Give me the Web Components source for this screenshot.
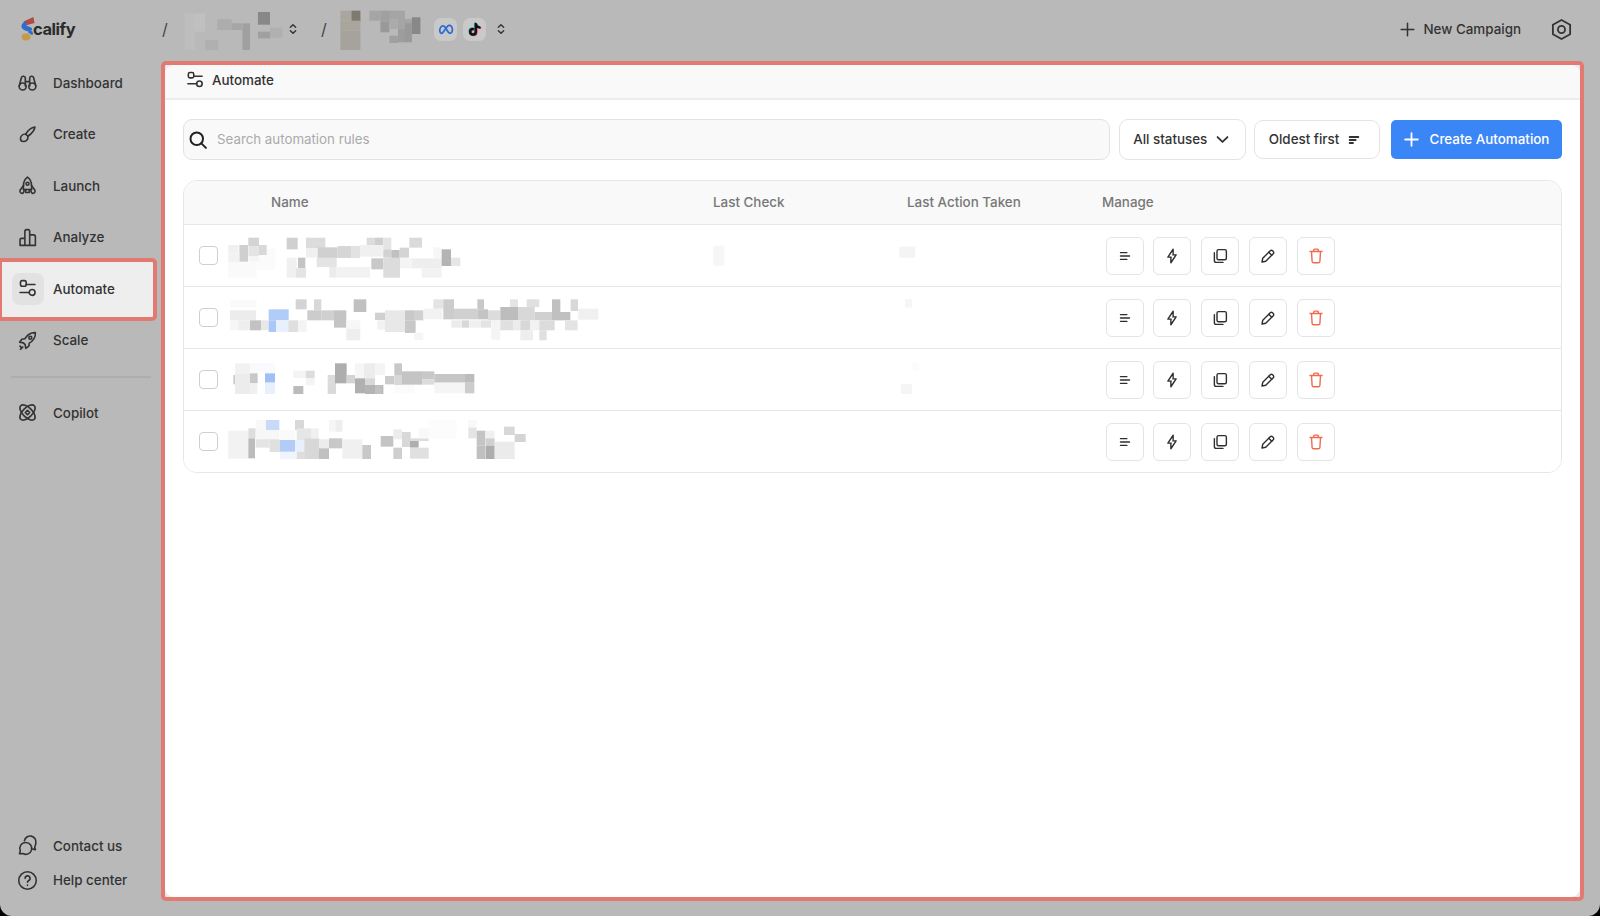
<!DOCTYPE html>
<html><head><meta charset="utf-8"><title>Automate</title>
<style>
html,body{margin:0;padding:0;background:#000;height:100%;overflow:hidden}
body{font-family:Inter,"Liberation Sans",sans-serif;font-size:13.4px}
</style></head><body>
<x-app>
  <x-topbar slot="top"></x-topbar>
  <x-sidebar slot="side"></x-sidebar>
  <x-panel slot="main" title="Automate">
    <x-toolbar></x-toolbar>
    <x-table></x-table>
  </x-panel>
</x-app>
<script>
const ICONS={
binoculars:'<circle cx="6.5" cy="16.5" r="4"/><circle cx="17.5" cy="16.5" r="4"/><path d="M2.5 16 5 6.5a2.3 2.3 0 0 1 4.5.5v9M21.500 16 19 6.500a2.300 2.300 0 0 0-4.500.500v9M9.500 11h5"/>',
brush:'<path d="M20.500 3.500c-3.500.5-8 4-10.500 8l2.500 2.500c3.500-2.500 7.500-7 8-10.500z"/><path d="M10 11.500c-3.500 0-6 2.300-6 5.300 0 2 1.500 3.200 3.500 3.200 3.200 0 5.400-2.800 5-6"/>',
launch:'<path d="M12 2.500c3 2.200 4.600 5.500 4.600 9.500l.2 4.500H7.200l.2-4.500c0-4 1.600-7.300 4.600-9.500z"/><circle cx="12" cy="10" r="1.700"/><path d="M7.400 12 3.500 17.500c-.5 1.800.5 3.500 2.300 3.500 1.500 0 2.200-1.500 2.400-4.500M16.600 12l3.900 5.500c.5 1.800-.5 3.500-2.300 3.500-1.500 0-2.200-1.500-2.400-4.500M10 16.500V20h4v-3.500"/>',
chart:'<path d="M3.500 21v-6.500a1.500 1.500 0 0 1 1.500-1.500h4v8zM9 21V5a2 2 0 0 1 2-2h1.500a2 2 0 0 1 2 2v16zM14.500 9H19a2 2 0 0 1 2 2v10H3.500"/>',
sliders:'<rect x="4" y="3" width="6.500" height="6.500" rx="2"/><path d="M10.500 7.500H20.500M3.500 16.500h10.500"/><circle cx="17.300" cy="16.500" r="3.300"/>',
rocket:'<path d="M21 3c-5-.2-9.300 2.300-12 7L5.500 10.500 3 14l4.300.7 2 2 .7 4.300 3.500-2.500.5-3.500c4.700-2.700 7.200-7 7-12z"/><circle cx="15.200" cy="8.800" r="1.700"/><path d="M3.500 18.500l1 1M6.500 19.500 4 22" stroke-width="2"/>',
atom:'<ellipse cx="12" cy="12" rx="11" ry="5.500" transform="rotate(45 12 12)"/><ellipse cx="12" cy="12" rx="11" ry="5.500" transform="rotate(-45 12 12)"/><path d="M12 9.500l2.500 2.500-2.500 2.500-2.500-2.500z"/>',
chat:'<path d="M10 8.500a6.800 6.800 0 1 1-3.300 12.700L2.800 21.500l1-3.400A6.800 6.800 0 0 1 10 8.500z"/><path d="M8.500 6.500A6.500 6.500 0 0 1 21.500 9c0 2.300-.8 3.700-1.300 4.700l.8 3-3.200-.7"/>',
help:'<circle cx="12" cy="12" r="10"/><path d="M9.300 9.500a2.800 2.800 0 1 1 4.200 2.400c-.9.500-1.500 1-1.500 2.100M12 17.300v.2" stroke-width="1.900"/>',
plus:'<path d="M12 4v16M4 12h16"/>',
hex:'<path d="M12 2l9 5v10l-9 5-9-5V7z"/><circle cx="12" cy="12" r="3.700"/>',
search:'<circle cx="10.500" cy="10.500" r="7.500"/><path d="M16 16l5.500 5.500"/>',
down:'<path d="M5 8.500l7 7 7-7"/>',
updown:'<path d="M8 9.500l4-4 4 4M8 14.500l4 4 4-4"/>',
sort:'<path d="M5.500 7.500h13M5.500 12h9M5.500 16.500h5"/>',
lines:'<path d="M6 7.500h8.500M6 12h12M6 16.500h8.500"/>',
bolt:'<path d="M13.500 9V3L6.500 13.500h4.500M10.500 15v6l7-10.500H13"/>',
copy:'<rect x="8" y="3.500" width="12.500" height="13.500" rx="2"/><path d="M4.500 7.500V18a2.500 2.500 0 0 0 2.500 2.500h9"/>',
pencil:'<path d="M4 20l1-5L15 5a2.100 2.100 0 0 1 3 0l1 1a2.100 2.100 0 0 1 0 3L9 19z"/><path d="M13 7l4 4"/>',
trash:'<path d="M9 5.500V4a1.200 1.200 0 0 1 1.200-1.200h3.600A1.200 1.200 0 0 1 15 4v1.500M4 6h16M6 6l.8 13.200a2 2 0 0 0 2 1.800h6.400a2 2 0 0 0 2-1.800L18 6"/>'
};
class XIcon extends HTMLElement{
  connectedCallback(){
    const s=this.getAttribute('size')||20,w=this.getAttribute('w')||1.6;
    this.attachShadow({mode:'open'}).innerHTML=`<style>:host{display:inline-flex;flex:none;width:${s}px;height:${s}px}svg{display:block;width:100%;height:100%;overflow:visible}</style><svg viewBox="0 0 24 24" fill="none" stroke="currentColor" stroke-width="${w*24/s}" stroke-linecap="round" stroke-linejoin="round">${ICONS[this.getAttribute('name')]||''}</svg>`;
  }
}
customElements.define('x-icon',XIcon);

const b=(s)=>s.trim().split(/;\s*/).filter(Boolean).map(r=>{const p=r.trim().split(/[ ,]+/);return p});
const MOSAIC={
 r1:{s:3,ox:170-226,oy:170-225,w:400,h:61,d:b(`175,277,85,46 #fafafa;260,235,55,65 #fbfbfb;175,225,30,22 #f0f0f0;208,225,26,50 #cfcfcf;235,203,32,25 #d4d4d4;235,228,32,30 #e4e4e4;267,225,23,30 #d8d8d8;175,247,33,30 #f2f2f2;235,258,32,17 #f5f5f5;350,203,33,35 #d0d0d0;408,203,58,32 #dcdcdc;408,235,35,28 #f0f0f0;443,232,60,32 #d0d0d0;503,228,42,36 #d6d6d6;545,228,25,36 #e2e2e2;570,225,70,35 #f0f0f0;590,203,25,22 #dcdcdc;615,203,25,22 #cfcfcf;640,203,24,35 #e4e4e4;640,238,24,25 #d2d2d2;664,240,25,24 #c0c0c0;689,233,28,30 #d4d4d4;718,203,38,30 #dadada;350,263,30,60 #f0f0f0;384,263,22,32 #c4c4c4;378,295,30,28 #e4e4e4;440,263,60,28 #e4e4e4;478,291,22,32 #ececec;500,291,100,32 #f2f2f2;604,265,36,33 #c8c8c8;640,263,50,60 #dcdcdc;690,265,35,30 #f4f4f4;725,265,90,30 #eeeeee;755,295,60,28 #f2f2f2;790,232,25,33 #f7f7f7;815,238,28,50 #b4b4b4;843,263,28,25 #e6e6e6`)},
 r2:{s:3,ox:220-226,oy:292-287,w:400,h:61,d:b(`30,25,80,20 #fafafa;30,55,78,30 #ececec;30,85,25,30 #f6f6f6;55,85,35,30 #eeeeee;90,85,33,30 #c2c2c2;123,85,23,30 #e8e8e8;146,52,60,33 #b1ccf7;146,85,22,35 #a9c7f7;168,85,37,35 #e8f0fd;205,85,30,35 #dfdfdf;235,85,25,35 #f4f4f4;227,22,33,30 #d4d4d4;282,22,22,33 #d8d8d8;262,55,42,30 #cccccc;304,55,38,30 #d0d0d0;342,55,37,52 #c4c4c4;379,85,42,25 #f7f7f7;379,110,42,35 #eeeeee;401,22,38,38 #c0c0c0;465,62,30,22 #d0d0d0;495,55,60,65 #e8e8e8;555,55,27,30 #c8c8c8;582,55,28,30 #d0d0d0;555,85,32,38 #c8c8c8;472,85,23,28 #f2f2f2;582,122,28,22 #f6f6f6;612,50,55,32 #f2f2f2;640,22,30,28 #e4e4e4;670,22,32,60 #cccccc;702,50,70,32 #d0d0d0;772,22,20,30 #c8c8c8;772,52,32,30 #c4c4c4;804,55,37,30 #dcdcdc;841,45,53,40 #bdbdbd;870,22,24,23 #e4e4e4;894,45,50,40 #d8d8d8;920,22,38,23 #e0e0e0;944,60,52,25 #d0d0d0;996,22,25,38 #c0c0c0;996,60,55,25 #c0c0c0;1052,22,22,35 #d8d8d8;1075,50,60,33 #f0f0f0;694,85,30,22 #ececec;725,85,22,22 #d8d8d8;747,85,36,22 #f0f0f0;783,85,30,22 #e4e4e4;814,85,27,58 #f4f4f4;841,85,38,30 #e0e0e0;879,85,22,30 #ececec;901,85,30,30 #d8d8d8;901,115,38,30 #eeeeee;931,85,28,30 #f2f2f2;958,85,46,30 #dcdcdc;958,115,22,30 #e0e0e0;1035,85,38,30 #e4e4e4`)},
 r3:{s:3,ox:170-226,oy:310-349,w:400,h:61,d:b(`190,195,5,28 #cccccc;195,160,45,30 #f2f2f2;240,160,75,30 #f9f9fe;195,190,45,62 #ececec;240,190,23,30 #c8c8c8;240,220,22,32 #f0f0f0;285,190,30,28 #a0bff5;285,218,30,34 #e8f0fd;370,182,37,22 #f4f4f4;407,182,27,22 #dcdcdc;407,204,27,22 #f4f4f4;370,228,30,24 #bbbbbb;473,195,25,30 #dcdcdc;473,225,25,27 #dadada;495,160,35,60 #aeaeae;530,195,25,25 #d4d4d4;555,160,30,45 #f6f6f6;582,160,33,45 #ececec;615,160,30,35 #f4f4f4;555,205,30,45 #b0b0b0;585,205,30,20 #d8d8d8;585,225,55,27 #b4b4b4;615,225,22,27 #c0c0c0;645,198,28,25 #cccccc;673,160,23,35 #c8c8c8;673,195,23,30 #d8d8d8;696,184,60,40 #c4c4c4;756,184,37,24 #c8c8c8;756,208,37,16 #dcdcdc;793,192,92,26 #c6c6c6;885,192,28,26 #bcbcbc;793,218,92,32 #f5f5f5;885,218,28,32 #cccccc;673,225,60,25 #fbfbfb`)},
 r4:{s:3,ox:170-226,oy:310-411,w:400,h:61,d:b(`258,330,30,30 #f8f8f8;288,330,40,30 #c8d9f9;375,330,27,30 #d8d8d8;175,362,60,84 #f2f2f2;235,355,22,30 #dddddd;235,385,20,60 #bcbcbc;257,360,70,30 #f7f7f7;257,388,42,25 #e4e4e4;299,388,30,38 #e0e0e0;328,360,48,30 #fafafa;329,425,50,22 #f0f4fc;329,390,46,35 #b3ccf6;375,390,28,35 #e8f0fd;380,355,43,35 #e6e6e6;403,385,45,62 #d8d8d8;380,425,25,22 #dddddd;423,355,23,30 #f0f0f0;447,388,30,27 #ececec;447,415,30,32 #c0c0c0;477,385,40,30 #c8c8c8;477,330,40,35 #f6f6f6;497,330,20,35 #eeeeee;517,388,60,58 #f0f0f0;577,405,26,42 #c8c8c8;632,378,38,32 #c4c4c4;670,358,26,30 #ececec;670,413,26,34 #cfcfcf;696,366,26,45 #d8d8d8;720,385,56,8 #dddddd;720,393,26,20 #aeaeae;720,413,56,33 #e0e0e0;746,355,30,30 #f8f8f8;775,330,85,55 #fcfcfc;895,352,25,33 #e4e4e4;895,330,25,22 #f8f8f8;920,362,26,45 #c4c4c4;920,407,26,40 #c0c0c0;947,362,27,23 #f0f0f0;947,385,27,22 #d0d0d0;947,407,27,40 #adadad;974,395,60,52 #ebebeb;1002,350,32,25 #d8d8d8;1034,372,33,24 #d4d4d4`)},
 c1:{s:1,ox:-713,oy:-225,w:389,h:61,d:b(`713.300,245.700,11,20 #f6f6f6;899.300,246.700,16,11 #f4f4f4`)},
 c2:{s:1,ox:-713,oy:-287,w:389,h:61,d:b(`905,299,7,8.500 #f6f6f6`)},
 c3:{s:1,ox:-713,oy:-349,w:389,h:61,d:b(`912,362.700,7,8.300 #fbfbfb;901,384,11,10 #f5f5f5`)},
 c4:{s:1,ox:-713,oy:-411,w:389,h:61,d:[]},
 t1:{s:2.9,sy:3,ox:-185,oy:-6,w:100,h:46,d:b(`535,40,30,110 #bebebe;565,40,30,55 #c0c0c0;595,120,38,30 #b0b0b0;630,57,42,33 #adadad;672,70,30,20 #a6a6a6;703,70,22,80 #a0a0a0;748,36,35,38 #888888;748,95,35,20 #a0a0a0;783,83,36,30 #b0b0b0`)},
 t2:{s:2.9,sy:3,ox:-342,oy:-6,w:82,h:46,d:b(`993,32,32,30 #a9a69f;1025,32,26,33 #7e7b6e;993,62,58,30 #a9a59c;993,92,58,58 #a6a39d;1077,32,32,30 #a5a5a5;1109,32,30,33 #a0a0a0;1109,65,26,32 #999999;1135,32,45,25 #a5a5a5;1135,57,25,30 #ababab;1160,57,40,30 #a5a5a5;1200,52,25,50 #888888;1135,107,25,22 #a0a0a0;1160,87,40,40 #9d9d9d;1180,70,20,55 #999999`)}
};
class XMosaic extends HTMLElement{
  connectedCallback(){
    const m=MOSAIC[this.getAttribute('set')],sy=m.sy||m.s;
    const rects=m.d.map(p=>{const [x,y,w,h]=p.slice(0,4).map(Number);return `<rect x="${(x/m.s+m.ox).toFixed(2)}" y="${(y/sy+m.oy).toFixed(2)}" width="${(w/m.s).toFixed(2)}" height="${(h/sy).toFixed(2)}" fill="${p[4]}"/>`}).join('');
    this.attachShadow({mode:'open'}).innerHTML=`<style>:host{display:block;flex:none;width:${m.w}px;height:${m.h}px}svg{display:block;overflow:visible;filter:blur(.5px)}</style><svg width="${m.w}" height="${m.h}" viewBox="0 0 ${m.w} ${m.h}">${rects}</svg>`;
  }
}
customElements.define('x-mosaic',XMosaic);

class XApp extends HTMLElement{
  connectedCallback(){
    this.attachShadow({mode:'open'}).innerHTML=`<style>
    :host{display:grid;width:1600px;height:916px;background:#b9b9b9;border-radius:0 0 12px 12px;overflow:hidden;grid-template-columns:161px 1fr;grid-template-rows:61px 1fr;color:#333}
    .top{grid-column:1/3}
    .main{padding:0 16px 15px 0;min-height:0;display:flex}
    ::slotted([slot=main]){flex:1}
    </style><div class="top"><slot name="top"></slot></div><slot name="side"></slot><div class="main"><slot name="main"></slot></div>`;
  }
}
customElements.define('x-app',XApp);

class XTopbar extends HTMLElement{
  connectedCallback(){
    this.attachShadow({mode:'open'}).innerHTML=`<style>
    :host{display:flex;align-items:center;height:61px;padding:0 27px 3px 21px;box-sizing:border-box;color:#333}
    .logo{display:flex;align-items:center;width:141px;flex:none}
    .logo svg{display:block;flex:none}
    .logo span{font-weight:700;font-size:16.500px;letter-spacing:-.45px;color:#2b2b2b;margin-left:-2px;margin-top:0}
    .sl{font-size:16px;color:#444;flex:none;width:6px;font-style:normal}
    .m1{margin-left:17px}
    .tile{width:23px;height:23px;border-radius:7px;background:#c9c9c9;display:flex;align-items:center;justify-content:center;flex:none;margin-left:6px}
    .right{margin-left:auto;display:flex;align-items:center}
    .new{display:flex;align-items:center;gap:6px;color:#333;font-size:13.400px;font-weight:450}
    .hex{margin-left:29px}
    </style>
    <div class="logo"><svg width="14" height="24" viewBox="0 0 14 24"><path d="M2.500 4.500 12.500 0l1 6-9 2.500z" fill="#b14a46"/><path d="M5 4C1.500 5.500 0 7.500 .5 10c.5 2.500 3.500 3.500 6.500 4.500l4-1.500c.5-1.500-.5-2.500-2-3-2-.6-4-1-4-2.500C5 6.500 5 5 5 4z" fill="#2a6ed0"/><path d="M7.500 14.500c3 .3 3.500 1.500 2.500 3" stroke="#2a6ed0" stroke-width="3" fill="none"/><ellipse cx="5" cy="20" rx="4.500" ry="3.400" fill="#c59b48"/></svg><span>calify</span></div>
    <i class="sl">/</i>
    <x-mosaic set="t1" class="m1"></x-mosaic>
    <x-icon name="updown" size="16" w="1.400"></x-icon>
    <i class="sl" style="margin-left:20px">/</i>
    <x-mosaic set="t2" style="margin-left:13px"></x-mosaic>
    <div class="tile" style="margin-left:12px"><svg width="16" height="16" viewBox="0 0 24 24" fill="none" stroke="#2d6cd4" stroke-width="2.600" stroke-linecap="round"><path d="M4 18c-1.500-2-1.500-6 0-8.500 2-3.500 5-3 7.500 1L15 16c2 3 5 3 6 0 1-3 .5-6-1-8-2-2.500-5-1.500-7 1.500L9 15c-1.500 2.500-3.500 4.500-5 3z"/></svg></div>
    <div class="tile"><svg width="15" height="15" viewBox="0 0 24 24" fill="none" stroke-width="3.800" stroke-linecap="round"><path d="M14 3v12.500a4.500 4.500 0 1 1-4.500-4.500M14 3c.5 3 2.500 5 6 5.500" stroke="#25c5cf" transform="translate(-1 -.8)"/><path d="M14 3v12.500a4.500 4.500 0 1 1-4.500-4.500M14 3c.5 3 2.500 5 6 5.500" stroke="#e53a5a" transform="translate(1 .8)"/><path d="M14 3v12.500a4.500 4.500 0 1 1-4.500-4.500M14 3c.5 3 2.500 5 6 5.500" stroke="#111"/></svg></div>
    <x-icon name="updown" size="16" w="1.400" style="margin-left:7px"></x-icon>
    <div class="right"><div class="new"><x-icon name="plus" size="19" w="1.500"></x-icon><span>New Campaign</span></div><x-icon class="hex" name="hex" size="23" w="1.800"></x-icon></div>`;
  }
}
customElements.define('x-topbar',XTopbar);

class XNavItem extends HTMLElement{
  connectedCallback(){
    const act=this.hasAttribute('active');
    this.attachShadow({mode:'open'}).innerHTML=`<style>
    :host{display:flex;align-items:center;height:36px;position:relative;color:#333}
    .t{width:32px;height:32px;margin-left:12px;border-radius:8px;display:flex;align-items:center;justify-content:center;flex:none;position:relative;z-index:1;${act?'background:#e2e2e2':''}}
    .t x-icon{margin-left:-1px}
    .l{margin-left:9px;font-size:13.400px;font-weight:${act?500:450};position:relative;z-index:1}
    .hl{position:absolute;left:0;width:157px;top:-13px;bottom:-14.200px;box-sizing:border-box;border:4px solid #e37a72;border-left-width:2px;border-radius:0 5px 5px 0;background:#eeeeee}
    </style>${act?'<div class="hl"></div>':''}<div class="t"><x-icon name="${this.getAttribute('icon')}" size="21" w="1.600"></x-icon></div><div class="l"><slot></slot></div>`;
  }
}
customElements.define('x-nav-item',XNavItem);

class XSidebar extends HTMLElement{
  connectedCallback(){
    this.attachShadow({mode:'open'}).innerHTML=`<style>
    :host{display:flex;flex-direction:column;width:161px;height:855px;box-sizing:border-box;padding:3.800px 0 18.700px}
    nav{display:flex;flex-direction:column;gap:15.500px}
    hr{border:0;height:2px;background:#aeaeae;margin:17.500px 11px 17px 11px;width:140px}
    .bot{margin-top:auto;display:flex;flex-direction:column}
    .bot x-nav-item{height:34.300px}
    </style>
    <nav><x-nav-item icon="binoculars">Dashboard</x-nav-item><x-nav-item icon="brush">Create</x-nav-item><x-nav-item icon="launch">Launch</x-nav-item><x-nav-item icon="chart">Analyze</x-nav-item><x-nav-item icon="sliders" active>Automate</x-nav-item><x-nav-item icon="rocket">Scale</x-nav-item></nav>
    <hr><x-nav-item icon="atom">Copilot</x-nav-item>
    <div class="bot"><x-nav-item icon="chat">Contact us</x-nav-item><x-nav-item icon="help">Help center</x-nav-item></div>`;
  }
}
customElements.define('x-sidebar',XSidebar);

class XPanel extends HTMLElement{
  connectedCallback(){
    this.attachShadow({mode:'open'}).innerHTML=`<style>
    :host{display:flex;box-sizing:border-box;border:4px solid #e37a72;border-radius:5px;background:#e9e9e9;color:#333}
    .in{flex:1;background:#fff;border-radius:9px;display:flex;flex-direction:column;overflow:hidden}
    header{height:35px;box-sizing:border-box;background:#f9f9f9;border-bottom:2px solid #ededed;display:flex;align-items:center;padding:0 0 3px 20px;gap:7px;font-size:13.400px;font-weight:450;color:#333;flex:none}
    .b{padding:19px 18px 17px;flex:1}
    </style><div class="in"><header><x-icon name="sliders" size="20" w="1.600"></x-icon><span>${this.getAttribute('title')}</span></header><div class="b"><slot></slot></div></div>`;
  }
}
customElements.define('x-panel',XPanel);

class XToolbar extends HTMLElement{
  connectedCallback(){
    this.attachShadow({mode:'open'}).innerHTML=`<style>
    :host{display:flex;align-items:center;height:41px;font-size:13.400px;font-weight:450;color:#333}
    span{position:relative;top:-1px}
    .s{flex:1;height:41px;box-sizing:border-box;background:#f9f9f9;border:1.500px solid #e2e2e2;border-radius:9px;display:flex;align-items:center;padding-left:4px;gap:9px;color:#aaa;font-size:13.300px;font-weight:400;min-width:0}
    .s x-icon{color:#222}
    .b{box-sizing:border-box;background:#fff;border:1.500px solid #e4e4e4;border-radius:9px;display:flex;align-items:center;justify-content:center;flex:none}
    .st{width:127.500px;height:41px;margin-left:9px;gap:7px}
    .ol{width:126px;height:38.500px;margin-left:8px;gap:7px;padding-right:3px}
    .cr{width:171px;height:38.500px;margin-left:11px;background:#3b86f7;border:0;border-radius:5px;color:#fff;gap:9px;font-weight:500;padding-right:2px}
    </style>
    <div class="s"><x-icon name="search" size="20" w="2"></x-icon><span>Search automation rules</span></div>
    <div class="b st"><span>All statuses</span><x-icon name="down" size="17" w="1.800"></x-icon></div>
    <div class="b ol"><span>Oldest first</span><x-icon name="sort" size="16" w="1.800"></x-icon></div>
    <div class="b cr"><x-icon name="plus" size="19" w="1.800"></x-icon><span>Create Automation</span></div>`;
  }
}
customElements.define('x-toolbar',XToolbar);

class XActionButton extends HTMLElement{
  connectedCallback(){
    const red=this.hasAttribute('danger');
    this.attachShadow({mode:'open'}).innerHTML=`<style>:host{display:flex;align-items:center;justify-content:center;width:38px;height:38px;box-sizing:border-box;border:1.500px solid #e4e4e4;border-radius:6px;background:#fff;color:${red?'#f2694c':'#2e2e2e'}}</style><x-icon name="${this.getAttribute('icon')}" size="18" w="1.400"></x-icon>`;
  }
}
customElements.define('x-action-button',XActionButton);

class XRow extends HTMLElement{
  connectedCallback(){
    const n=this.getAttribute('n');
    this.attachShadow({mode:'open'}).innerHTML=`<style>
    :host{display:grid;grid-template-columns:529px 389px 1fr;height:61px;border-top:1px solid #e6e6e6;align-items:center;background:#fff}
    .nm{display:flex;align-items:center;height:61px}
    .cb{width:19px;height:19px;box-sizing:border-box;border:1.500px solid #cfcfcf;border-radius:4px;margin:0 8.500px 0 14.500px;background:#fff;flex:none}
    .mg{display:flex;gap:9.800px;padding-left:3.500px;align-items:center}
    </style>
    <div class="nm"><span class="cb"></span><x-mosaic set="r${n}"></x-mosaic></div>
    <x-mosaic set="c${n}"></x-mosaic>
    <div class="mg"><x-action-button icon="lines"></x-action-button><x-action-button icon="bolt"></x-action-button><x-action-button icon="copy"></x-action-button><x-action-button icon="pencil"></x-action-button><x-action-button icon="trash" danger></x-action-button></div>`;
  }
}
customElements.define('x-row',XRow);

class XTable extends HTMLElement{
  connectedCallback(){
    this.attachShadow({mode:'open'}).innerHTML=`<style>
    :host{display:block;margin-top:20px;border:1.200px solid #e6e6e6;border-radius:14px;overflow:hidden;background:#fff}
    .h{display:grid;grid-template-columns:87px 442px 194px 195px 1fr;height:43.300px;box-sizing:border-box;padding-bottom:2px;align-items:center;background:#f9f9f9;font-size:13.400px;font-weight:450;color:#777}
    </style>
    <div class="h"><span></span><span>Name</span><span>Last Check</span><span>Last Action Taken</span><span>Manage</span></div>
    <x-row n="1"></x-row><x-row n="2"></x-row><x-row n="3"></x-row><x-row n="4"></x-row>`;
  }
}
customElements.define('x-table',XTable);
</script>
</body></html>
